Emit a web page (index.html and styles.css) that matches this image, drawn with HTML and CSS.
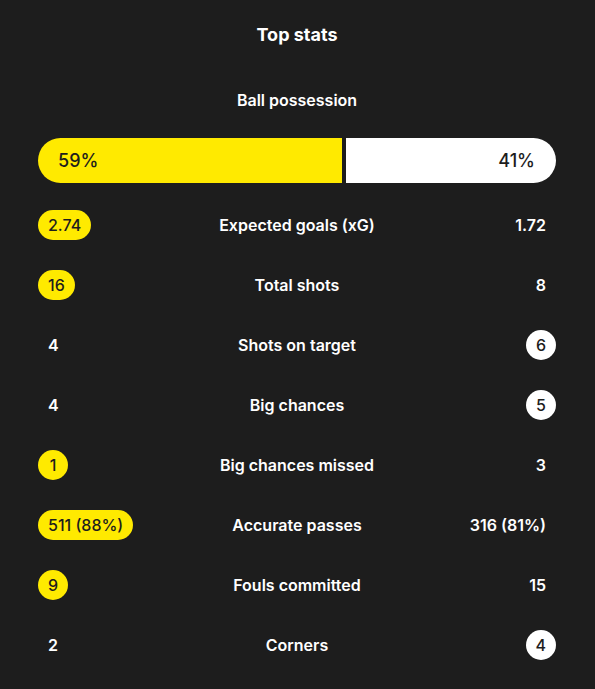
FILE: index.html
```html
<!DOCTYPE html>
<html>
<head>
<meta charset="utf-8">
<link rel="stylesheet" href="styles.css">
</head>
<body>
<div class="card">
  <h2 class="title">Top stats</h2>
  <div class="poss-label">Ball possession</div>
  <div class="poss-bar">
    <div class="poss home" style="flex-basis: 58.6%">59%</div>
    <div class="poss away">41%</div>
  </div>
  <div class="rows">
    <div class="row"><div class="l"><span class="pill yellow">2.74</span></div><div class="c">Expected goals (xG)</div><div class="r"><span class="pill">1.72</span></div></div>
    <div class="row"><div class="l"><span class="pill yellow">16</span></div><div class="c">Total shots</div><div class="r"><span class="pill">8</span></div></div>
    <div class="row"><div class="l"><span class="pill">4</span></div><div class="c">Shots on target</div><div class="r"><span class="pill white">6</span></div></div>
    <div class="row"><div class="l"><span class="pill">4</span></div><div class="c">Big chances</div><div class="r"><span class="pill white">5</span></div></div>
    <div class="row"><div class="l"><span class="pill yellow">1</span></div><div class="c">Big chances missed</div><div class="r"><span class="pill">3</span></div></div>
    <div class="row"><div class="l"><span class="pill yellow">511 (88%)</span></div><div class="c">Accurate passes</div><div class="r"><span class="pill">316 (81%)</span></div></div>
    <div class="row"><div class="l"><span class="pill yellow">9</span></div><div class="c">Fouls committed</div><div class="r"><span class="pill">15</span></div></div>
    <div class="row"><div class="l"><span class="pill">2</span></div><div class="c">Corners</div><div class="r"><span class="pill white">4</span></div></div>
  </div>
</div>
</body>
</html>
```
FILE: styles.css
```css
html, body {
  margin: 0;
  padding: 0;
  background: #1d1d1d;
}
body {
  font-family: Inter, "Noto Sans", sans-serif;
  color: #ffffff;
  width: 595px;
  height: 689px;
  overflow: hidden;
}
.card {
  padding: 24px 39px 0 38px;
}
.title {
  margin: 0;
  text-align: center;
  font-size: 18px;
  font-weight: 700;
  line-height: 22px;
}
.poss-label {
  margin-top: 44px;
  text-align: center;
  font-size: 16px;
  font-weight: 600;
  line-height: 20px;
}
.poss-bar {
  margin-top: 28px;
  display: flex;
  gap: 4px;
  height: 45px;
  border-radius: 23px;
  overflow: hidden;
}
.poss {
  display: flex;
  align-items: center;
  box-sizing: border-box;
  font-size: 18px;
  font-weight: 500;
  color: #1d1d1d;
}
.poss.home {
  flex-grow: 0;
  flex-shrink: 0;
  background: #ffea00;
  padding-left: 20px;
}
.poss.away {
  flex: 1;
  background: #ffffff;
  justify-content: flex-end;
  padding-right: 21px;
}
.rows {
  margin-top: 12px;
}
.row {
  display: grid;
  grid-template-columns: 1fr auto 1fr;
  align-items: center;
  height: 60px;
}
.c {
  text-align: center;
  font-size: 16px;
  font-weight: 600;
}
.r {
  display: flex;
  justify-content: flex-end;
}
.l {
  display: flex;
  justify-content: flex-start;
}
.pill {
  display: inline-flex;
  align-items: center;
  justify-content: center;
  height: 30px;
  min-width: 30px;
  box-sizing: border-box;
  padding: 0 10px;
  border-radius: 15px;
  font-size: 16px;
  font-weight: 600;
}
.pill.yellow {
  background: #ffea00;
  color: #1d1d1d;
  font-weight: 500;
}
.pill.white {
  background: #ffffff;
  color: #1d1d1d;
  font-weight: 500;
}
```
